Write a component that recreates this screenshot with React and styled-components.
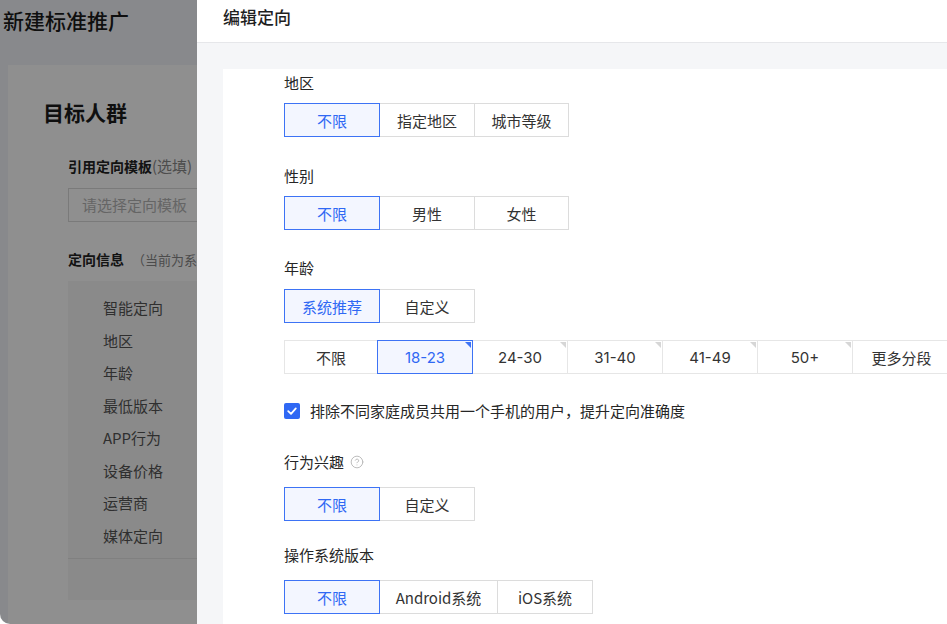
import React from "react";
import styled, { createGlobalStyle } from "styled-components";
import { CircleHelp } from "lucide-react";

const FONT = `"Noto Sans CJK SC", "Noto Sans", sans-serif`;

const Global = createGlobalStyle`
  html, body { margin: 0; padding: 0; background: #ffffff; }
  body { font-family: ${FONT}; }
  * { box-sizing: border-box; }
`;

const Frame = styled.div`
  position: relative;
  width: 947px;
  height: 624px;
  overflow: hidden;
  border-bottom-left-radius: 10px;
  font-family: ${FONT};
`;

/* ---------- background page ---------- */
const Page = styled.div`
  width: 100%;
  height: 100%;
  background: #f3f5f9;
  display: flex;
  flex-direction: column;
`;

const PageTitle = styled.div`
  height: 65px;
  padding: 6px 0 0 3px;
  font-size: 21px;
  line-height: 28px;
  font-weight: 500;
  color: #1b1b1b;
`;

const Card = styled.div`
  flex: 1;
  margin-left: 8px;
  background: #ffffff;
  padding: 31px 0 0 35px;
`;

const CardTitle = styled.div`
  font-size: 21px;
  line-height: 32px;
  font-weight: 700;
  color: #1b1b1b;
`;

const CardBody = styled.div`
  margin: 27px 0 0 25px;
  display: flex;
  flex-direction: column;
`;

const FieldLabel = styled.div`
  font-size: 14px;
  line-height: 22px;
  font-weight: 700;
  color: #222;
  white-space: nowrap;
  margin-top: ${(p) => p.$mt || 0}px;
  span {
    font-weight: 400;
    color: #888;
    font-size: ${(p) => p.$subSize || 14}px;
    margin-left: ${(p) => p.$subGap || 0}px;
  }
`;

const FakeInput = styled.div`
  margin-top: 11px;
  height: 34px;
  width: 260px;
  border: 1px solid #d9d9d9;
  padding-left: 13px;
  font-size: 15px;
  line-height: 32px;
  color: #b5b5b5;
`;

const InfoBox = styled.div`
  margin-top: 10px;
  width: 300px;
  height: 319px;
  background: #f7f7f7;
  padding: 11px 0 0 35px;
  display: flex;
  flex-direction: column;
`;

const InfoItem = styled.div`
  font-size: 15px;
  line-height: 32.5px;
  color: #555;
`;

const InfoDivider = styled.div`
  margin: 6px 0 0 -35px;
  height: 1px;
  background: #e4e4e4;
`;

const Mask = styled.div`
  position: absolute;
  inset: 0;
  background: rgba(0, 0, 0, 0.44);
`;

/* ---------- drawer ---------- */
const Drawer = styled.div`
  position: absolute;
  top: 0;
  bottom: 0;
  left: 197px;
  right: 0;
  background: #ffffff;
  display: flex;
  flex-direction: column;
`;

const DrawerHeader = styled.div`
  height: 43px;
  flex: none;
  border-bottom: 1px solid #e6e7ea;
  padding: 4px 0 0 26px;
  font-size: 17px;
  line-height: 26px;
  font-weight: 500;
  color: #1f1f1f;
`;

const DrawerBody = styled.div`
  flex: 1;
  background: #f5f6f8;
  padding: 26px 0 0 26px;
  display: flex;
`;

const Panel = styled.div`
  flex: 1;
  background: #ffffff;
  padding: 3px 0 0 61px;
  display: flex;
  flex-direction: column;
`;

const Section = styled.div`
  display: flex;
  flex-direction: column;
  margin-bottom: ${(p) => p.$mb || 0}px;
`;

const Label = styled.div`
  display: flex;
  align-items: center;
  gap: 6px;
  font-size: 15px;
  line-height: 22px;
  color: #262626;
  margin-bottom: ${(p) => p.$mb || 9}px;
  svg { color: #b3b3b3; }
`;

const Group = styled.div`
  display: flex;
`;

const Btn = styled.div`
  width: ${(p) => p.$w || 96}px;
  height: 34px;
  margin-left: ${(p) => (p.$first ? 0 : -1)}px;
  border: 1px solid ${(p) => (p.$active ? "#3d73f5" : "#dcdcdc")};
  background: ${(p) => (p.$active ? "#f3f6ff" : "#ffffff")};
  color: ${(p) => (p.$active ? "#2f68f4" : "#333333")};
  position: relative;
  z-index: ${(p) => (p.$active ? 1 : 0)};
  display: flex;
  align-items: center;
  justify-content: center;
  font-size: 15px;
`;

const AgeRow = styled.div`
  margin-top: 17px;
  display: grid;
  grid-template-columns: 94px 95px 95px 95px 95px 95px 98px;
`;

const AgeCell = styled.div`
  height: 34px;
  margin-left: ${(p) => (p.$first ? 0 : -1)}px;
  border: 1px solid ${(p) => (p.$active ? "#3d73f5" : "#e6e6e6")};
  background: ${(p) => (p.$active ? "#f3f6ff" : "#ffffff")};
  color: ${(p) => (p.$active ? "#2f68f4" : "#333333")};
  position: relative;
  z-index: ${(p) => (p.$active ? 1 : 0)};
  display: flex;
  align-items: center;
  justify-content: center;
  font-size: 15px;
  font-family: ${(p) => (p.$num ? `Inter, "Noto Sans CJK SC", sans-serif` : FONT)};
`;

const Corner = styled.span`
  position: absolute;
  top: 1px;
  right: 1px;
  width: 0;
  height: 0;
  border-style: solid;
  border-width: 0 6px 6px 0;
  border-color: transparent ${(p) => (p.$active ? "#3d73f5" : "#d6d6d6")} transparent transparent;
`;

const CheckRow = styled.div`
  margin: 26px 0 29px;
  display: flex;
  align-items: center;
  gap: 10px;
  font-size: 15px;
  line-height: 22px;
  color: #262626;
`;

const CheckBox = styled.span`
  width: 16px;
  height: 16px;
  border-radius: 2px;
  background: #2f68f4;
  display: flex;
  align-items: center;
  justify-content: center;
`;

function Buttons({ items, active = 0, widths = [] }) {
  return (
    <Group>
      {items.map((t, i) => (
        <Btn key={t} $first={i === 0} $active={i === active} $w={widths[i]}>
          {t}
        </Btn>
      ))}
    </Group>
  );
}

const ages = [
  { t: "不限" },
  { t: "18-23", c: true, a: true, n: true },
  { t: "24-30", c: true, n: true },
  { t: "31-40", c: true, n: true },
  { t: "41-49", c: true, n: true },
  { t: "50+", c: true, n: true },
  { t: "更多分段" },
];

const infoItems = ["智能定向", "地区", "年龄", "最低版本", "APP行为", "设备价格", "运营商", "媒体定向"];

export default function App() {
  return (
    <Frame>
      <Global />
      <Page>
        <PageTitle>新建标准推广</PageTitle>
        <Card>
          <CardTitle>目标人群</CardTitle>
          <CardBody>
            <FieldLabel $subSize={15}>
              引用定向模板<span>(选填)</span>
            </FieldLabel>
            <FakeInput>请选择定向模板</FakeInput>
            <FieldLabel $mt={26} $subSize={13} $subGap={8}>
              定向信息<span>（当前为系统推荐）</span>
            </FieldLabel>
            <InfoBox>
              {infoItems.map((t) => (
                <InfoItem key={t}>{t}</InfoItem>
              ))}
              <InfoDivider />
            </InfoBox>
          </CardBody>
        </Card>
      </Page>
      <Mask />
      <Drawer>
        <DrawerHeader>编辑定向</DrawerHeader>
        <DrawerBody>
          <Panel>
            <Section $mb={28}>
              <Label>地区</Label>
              <Buttons items={["不限", "指定地区", "城市等级"]} widths={[96, 96, 95]} />
            </Section>
            <Section $mb={27}>
              <Label>性别</Label>
              <Buttons items={["不限", "男性", "女性"]} widths={[96, 96, 95]} />
            </Section>
            <Section>
              <Label $mb={10}>年龄</Label>
              <Buttons items={["系统推荐", "自定义"]} />
              <AgeRow>
                {ages.map((a, i) => (
                  <AgeCell key={a.t} $first={i === 0} $active={a.a} $num={a.n}>
                    {a.t}
                    {a.c && <Corner $active={a.a} />}
                  </AgeCell>
                ))}
              </AgeRow>
            </Section>
            <CheckRow>
              <CheckBox>
                <svg width="12" height="12" viewBox="0 0 12 12">
                  <polyline
                    points="2.2,6.2 5,8.8 9.8,3.4"
                    fill="none"
                    stroke="#ffffff"
                    strokeWidth="1.8"
                    strokeLinecap="round"
                    strokeLinejoin="round"
                  />
                </svg>
              </CheckBox>
              排除不同家庭成员共用一个手机的用户，提升定向准确度
            </CheckRow>
            <Section $mb={23}>
              <Label $mb={14}>
                行为兴趣
                <CircleHelp size={14} strokeWidth={1.5} />
              </Label>
              <Buttons items={["不限", "自定义"]} />
            </Section>
            <Section>
              <Label $mb={14}>操作系统版本</Label>
              <Buttons items={["不限", "Android系统", "iOS系统"]} widths={[96, 119, 96]} />
            </Section>
          </Panel>
        </DrawerBody>
      </Drawer>
    </Frame>
  );
}
